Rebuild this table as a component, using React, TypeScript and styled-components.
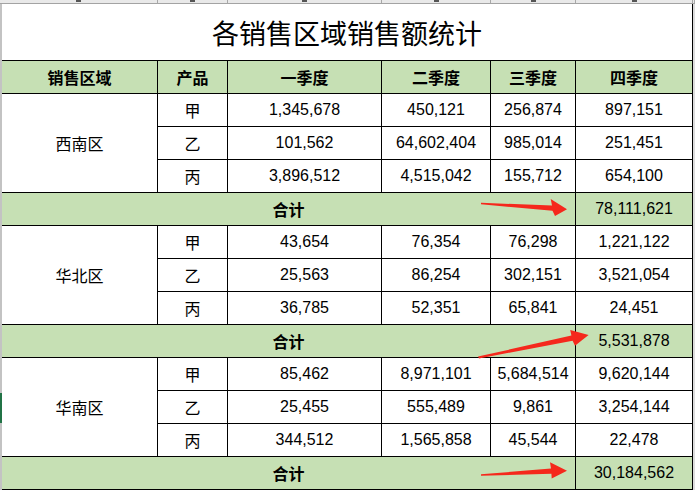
import React from "react";
import styled, { createGlobalStyle } from "styled-components";

const GlobalStyle = createGlobalStyle`
  html, body { margin: 0; padding: 0; background: #ffffff; }
  body { font-family: "Liberation Sans", "Noto Sans CJK SC", sans-serif; color: #000; }
`;

const CJK = `"Noto Sans CJK SC", "Liberation Sans", sans-serif`;
const GREEN = "#c6e0b4";

const Page = styled.div`
  position: relative;
  width: 695px;
  height: 491px;
  overflow: hidden;
  display: flex;
  flex-direction: column;
  background: #fff;
`;

const ColumnStrip = styled.div`
  display: grid;
  grid-template-columns: 158px 70px 154px 109px 85px 117px 2px;
  height: 3px;
  background: #e9e9e9;
  border-bottom: 1px solid #a3a3a3;
  overflow: hidden;
`;

const StripCell = styled.div`
  box-sizing: border-box;
  border-right: 1px solid #a8a8a8;
  display: flex;
  align-items: flex-start;
  justify-content: center;
`;

const StripMark = styled.span`
  display: block;
  width: 5px;
  height: 2px;
  background: #555;
`;

const Body = styled.div`
  display: flex;
  flex-direction: row;
`;

const LeftGutter = styled.div`
  width: 2px;
  background: #c3c3c3;
  display: flex;
  flex-direction: column;
  padding-top: 389px;
  box-sizing: border-box;
`;

const RowMarker = styled.div`
  width: 2px;
  height: 30px;
  background: #217346;
`;

const RightGutter = styled.div`
  width: 2px;
  background: #dcdcdc;
`;

const Sheet = styled.div`
  display: grid;
  grid-template-columns: 156px 70px 154px 109px 85px 117px;
  grid-template-rows: 57px;
  grid-auto-rows: 33px;
`;

const Cell = styled.div<{ $green?: boolean; $bold?: boolean; $span?: number; $rows?: number; $cjk?: boolean }>`
  box-sizing: border-box;
  border-right: 1px solid #000;
  border-bottom: 1px solid #000;
  display: flex;
  align-items: center;
  justify-content: center;
  font-size: 16px;
  white-space: nowrap;
  background: ${(p) => (p.$green ? GREEN : "#fff")};
  font-weight: ${(p) => (p.$bold ? 700 : 400)};
  font-family: ${(p) => (p.$cjk ? CJK : `"Liberation Sans", "Noto Sans CJK SC", sans-serif`)};
  ${(p) => (p.$span ? `grid-column: span ${p.$span};` : "")}
  ${(p) => (p.$rows ? `grid-row: span ${p.$rows};` : "")}
`;

const TitleCell = styled.div`
  grid-column: 1 / -1;
  box-sizing: border-box;
  border-right: 1px solid #000;
  border-bottom: 1px solid #000;
  display: flex;
  align-items: center;
  justify-content: center;
  font-family: ${CJK};
  font-size: 27px;
  font-weight: 400;
`;

const ArrowLayer = styled.svg`
  position: absolute;
  left: 0;
  top: 0;
  width: 695px;
  height: 491px;
  pointer-events: none;
`;

const headers = ["销售区域", "产品", "一季度", "二季度", "三季度", "四季度"];

const regions = [
  {
    name: "西南区",
    rows: [
      ["甲", "1,345,678", "450,121", "256,874", "897,151"],
      ["乙", "101,562", "64,602,404", "985,014", "251,451"],
      ["丙", "3,896,512", "4,515,042", "155,712", "654,100"],
    ],
    total: "78,111,621",
  },
  {
    name: "华北区",
    rows: [
      ["甲", "43,654", "76,354", "76,298", "1,221,122"],
      ["乙", "25,563", "86,254", "302,151", "3,521,054"],
      ["丙", "36,785", "52,351", "65,841", "24,451"],
    ],
    total: "5,531,878",
  },
  {
    name: "华南区",
    rows: [
      ["甲", "85,462", "8,971,101", "5,684,514", "9,620,144"],
      ["乙", "25,455", "555,489", "9,861", "3,254,144"],
      ["丙", "344,512", "1,565,858", "45,544", "22,478"],
    ],
    total: "30,184,562",
  },
];

const arrows = [
  "481,202.8 552,205.6 550.7,199 567,209.3 555,216 552.5,210.8 481,204.3",
  "478,356.6 571.4,335.6 570.2,330 588.6,335 575,345.8 572.6,340.8 479,358.4",
  "481,474.2 551,468.6 550,462.3 567,470.7 551.7,478.4 551.4,473.8 481,475.8",
];

export default function App() {
  return (
    <>
      <GlobalStyle />
      <Page>
        <ColumnStrip>
          {[true, true, true, true, true, true, false].map((m, i) => (
            <StripCell key={i}>{m && <StripMark />}</StripCell>
          ))}
        </ColumnStrip>
        <Body>
          <LeftGutter>
            <RowMarker />
          </LeftGutter>
          <Sheet>
            <TitleCell>各销售区域销售额统计</TitleCell>
            {headers.map((h) => (
              <Cell key={h} $green $bold $cjk>
                {h}
              </Cell>
            ))}
            {regions.map((r) => (
              <React.Fragment key={r.name}>
                {r.rows.map((row, ri) => (
                  <React.Fragment key={ri}>
                    {ri === 0 && (
                      <Cell $rows={3} $cjk>
                        {r.name}
                      </Cell>
                    )}
                    {row.map((v, ci) => (
                      <Cell key={ci} $cjk={ci === 0}>
                        {v}
                      </Cell>
                    ))}
                  </React.Fragment>
                ))}
                <Cell $green $bold $cjk $span={5}>
                  合计
                </Cell>
                <Cell $green>{r.total}</Cell>
              </React.Fragment>
            ))}
          </Sheet>
          <RightGutter />
        </Body>
        <ArrowLayer viewBox="0 0 695 491">
          {arrows.map((pts, i) => (
            <polygon key={i} points={pts} fill="#f5281c" />
          ))}
        </ArrowLayer>
      </Page>
    </>
  );
}
